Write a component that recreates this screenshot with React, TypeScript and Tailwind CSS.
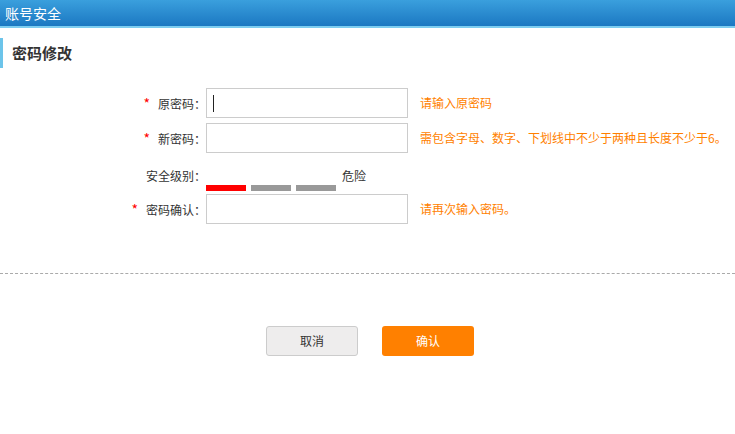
import React from "react";

const fields = [
  { label: "原密码：", hint: "请输入原密码", cursor: true },
  { label: "新密码：", hint: "需包含字母、数字、下划线中不少于两种且长度不少于6。", cursor: false },
];

const App = () => {
  return (
    <div
      className="w-[735px] h-[434px] bg-white text-[12px] text-[#333]"
      style={{ fontFamily: '"Noto Sans CJK SC", "Noto Sans", sans-serif' }}
    >
      <div className="h-[26px] bg-gradient-to-b from-[#3a9fdd] to-[#1b78c2] pl-[5px] text-[14px] leading-[26px] text-white">
        账号安全
      </div>
      <div className="h-[2px] bg-[#7dcdf0]" />

      <div className="mt-[10px] h-[30px] border-l-[3px] border-[#6cc4ea] pl-[9px] text-[15px] font-bold leading-[30px] text-[#333]">
        密码修改
      </div>

      <div className="mt-[20px] flex flex-col">
        {fields.map((f, idx) => (
          <div key={idx} className={`flex items-center ${idx > 0 ? "mt-[5px]" : ""}`}>
            <div className="w-[206px] text-right">
              <span className="mr-[8px] text-[14px] text-[#f00]">*</span>
              {f.label}
            </div>
            <div className="flex h-[30px] w-[202px] items-center border border-[#ccc] pl-[6px]">
              {f.cursor && <div className="h-[17px] w-px bg-[#222]" />}
            </div>
            <div className="ml-[12px] text-[#ff7f00]">{f.hint}</div>
          </div>
        ))}

        <div className="mt-[14px] flex items-start">
          <div className="w-[206px] text-right leading-[18px]">安全级别：</div>
          <div className="flex flex-col">
            <div className="pl-[136px] leading-[18px]">危险</div>
            <div className="flex gap-[5px]">
              <div className="h-[6px] w-[40px] bg-[#f00]" />
              <div className="h-[6px] w-[40px] bg-[#999]" />
              <div className="h-[6px] w-[40px] bg-[#999]" />
            </div>
          </div>
        </div>

        <div className="mt-[3px] flex items-center">
          <div className="w-[206px] text-right">
            <span className="mr-[8px] text-[14px] text-[#f00]">*</span>
            密码确认：
          </div>
          <div className="h-[30px] w-[202px] border border-[#ccc]" />
          <div className="ml-[12px] text-[#ff7f00]">请再次输入密码。</div>
        </div>
      </div>

      <div className="mt-[49px] border-t border-dashed border-[#aaa]" />

      <div className="mt-[52px] flex justify-center gap-[24px] pl-[5px]">
        <button className="h-[30px] w-[92px] rounded-[3px] border border-[#ccc] bg-[#eeeded] text-[12px] text-[#333]">
          取消
        </button>
        <button className="h-[30px] w-[92px] rounded-[3px] bg-[#ff8000] text-[12px] text-white">
          确认
        </button>
      </div>
    </div>
  );
};

export default App;
